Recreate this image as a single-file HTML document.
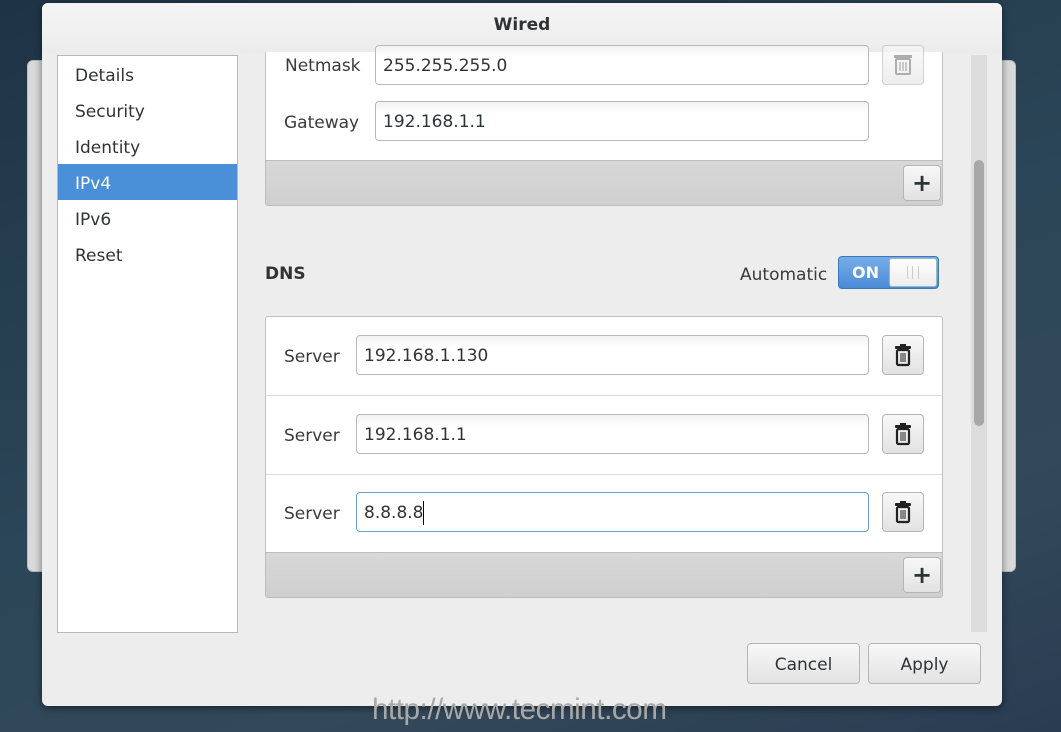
<!DOCTYPE html>
<html><head><meta charset="utf-8"><style>
*{box-sizing:border-box;margin:0;padding:0}
body{width:1061px;height:732px;overflow:hidden;background:linear-gradient(160deg,#1e3446 0%,#2b4658 50%,#33495a 75%,#2a3c52 100%);position:relative;font-family:"DejaVu Sans","Liberation Sans",sans-serif;color:#2e3436;font-size:17px}
.abs{position:absolute}
.behind{left:27px;top:60px;width:989px;height:512px;background:#d9d9d9;border-radius:6px;border:1px solid #bbb}
.dlg{left:42px;top:3px;width:960px;height:703px;background:#ededed;border-radius:6px;box-shadow:0 2px 8px rgba(0,0,0,.5)}
.title{left:0;top:0;width:960px;height:50px;text-align:center;line-height:44px;font-weight:bold;font-size:17px;color:#2e3436;background:linear-gradient(#f4f4f4,#ececec);border-radius:6px 6px 0 0}
.side{left:15px;top:52px;width:181px;height:578px;background:#fff;border:1px solid #b8b8b8}
.side div{height:36px;line-height:36px;padding-left:17px;padding-top:2px}
.side .sel{background:#4a90d9;color:#fff}
.list{background:#fff;border:1px solid #c0c0c0}
.entry{position:absolute;height:40px;border:1px solid #b8b8b8;border-radius:4px;background:linear-gradient(#f2f2f2,#fff 30%);line-height:40px;padding-left:7px;font-size:17px}
.tb{position:absolute;background:linear-gradient(#d8d8d8,#cfcfcf);border:1px solid #bdbdbd}
.btn{position:absolute;border:1px solid #b5b5b5;border-radius:4px;background:linear-gradient(#f8f8f8,#e2e2e2);text-align:center}
.lbl{position:absolute;font-size:17px;color:#3a3a3a}
.sep{position:absolute;left:0;width:676px;height:1px;background:#dadada}
</style></head><body>
<div class="abs behind"></div>
<div class="abs dlg">
 <div class="abs title">Wired</div>
 <div class="abs side"><div>Details</div><div>Security</div><div>Identity</div><div class="sel">IPv4</div><div>IPv6</div><div>Reset</div></div>
</div>
<div class="abs list" style="left:265px;top:52px;width:678px;height:110px;border-top:none"></div>
<div class="lbl" style="left:285px;top:56px">Netmask</div>
<div class="entry" style="left:375px;top:45px;width:494px">255.255.255.0</div>
<div class="btn" style="left:882px;top:45px;width:42px;height:40px;opacity:.6">
<svg width="22" height="24" viewBox="0 0 22 24" style="margin-top:6px"><rect x="4" y="7" width="14" height="15" rx="1" fill="none" stroke="#777" stroke-width="2"/><rect x="2" y="3" width="18" height="3" fill="#777"/><path d="M8 10v9M11 10v9M14 10v9" stroke="#777" stroke-width="1.2"/></svg></div>
<div class="lbl" style="left:284px;top:113px">Gateway</div>
<div class="entry" style="left:375px;top:101px;width:494px">192.168.1.1</div>
<div class="tb" style="left:265px;top:160px;width:678px;height:46px;border-radius:0 0 3px 3px"></div>
<div class="btn" style="left:903px;top:165px;width:38px;height:36px;line-height:34px;font-size:24px;font-weight:bold">+</div>
<div class="lbl" style="left:265px;top:264px;font-weight:bold;color:#2e3436">DNS</div>
<div class="lbl" style="left:740px;top:265px">Automatic</div>
<div class="abs" style="left:838px;top:256px;width:101px;height:33px;border:1px solid #3a78c0;border-radius:4px;background:linear-gradient(#77aee8,#4a8ad6)">
 <span class="abs" style="left:13px;top:6px;color:#fff;font-weight:bold;font-size:16px">ON</span>
 <div class="abs" style="left:50px;top:1px;width:48px;height:29px;background:linear-gradient(#fff,#ececec);border-radius:3px;border:1px solid #9bb"><span class="abs" style="left:17px;top:7px;width:12px;height:13px;border-left:1px solid #ccc;border-right:1px solid #ccc"></span><span class="abs" style="left:22px;top:7px;width:1px;height:13px;background:#ccc"></span></div>
</div>
<div class="abs list" style="left:265px;top:316px;width:678px;height:238px;border-radius:3px 3px 0 0">
 <div class="sep" style="top:78px"></div><div class="sep" style="top:157px"></div>
</div>
<div class="lbl" style="left:284px;top:347px">Server</div>
<div class="entry" style="left:356px;top:335px;width:513px">192.168.1.130</div>
<div class="lbl" style="left:284px;top:426px">Server</div>
<div class="entry" style="left:356px;top:414px;width:513px">192.168.1.1</div>
<div class="lbl" style="left:284px;top:504px">Server</div>
<div class="entry" style="left:356px;top:492px;width:513px;border-color:#6b9fd6;background:#fff">8.8.8.8<span style="display:inline-block;width:1px;height:24px;background:#000;vertical-align:middle"></span></div>
<div class="btn" style="left:882px;top:335px;width:42px;height:40px"><svg width="22" height="24" viewBox="0 0 22 24" style="margin-top:7px"><rect x="5" y="7" width="12" height="15" rx="1.5" fill="none" stroke="#222" stroke-width="2.2"/><rect x="3" y="3" width="16" height="3" rx="1" fill="#222"/><rect x="8" y="1" width="6" height="2" fill="#222"/><path d="M9 10v9M11 10v9M13 10v9" stroke="#222" stroke-width="1"/></svg></div>
<div class="btn" style="left:882px;top:414px;width:42px;height:40px"><svg width="22" height="24" viewBox="0 0 22 24" style="margin-top:7px"><rect x="5" y="7" width="12" height="15" rx="1.5" fill="none" stroke="#222" stroke-width="2.2"/><rect x="3" y="3" width="16" height="3" rx="1" fill="#222"/><rect x="8" y="1" width="6" height="2" fill="#222"/><path d="M9 10v9M11 10v9M13 10v9" stroke="#222" stroke-width="1"/></svg></div>
<div class="btn" style="left:882px;top:492px;width:42px;height:40px"><svg width="22" height="24" viewBox="0 0 22 24" style="margin-top:7px"><rect x="5" y="7" width="12" height="15" rx="1.5" fill="none" stroke="#222" stroke-width="2.2"/><rect x="3" y="3" width="16" height="3" rx="1" fill="#222"/><rect x="8" y="1" width="6" height="2" fill="#222"/><path d="M9 10v9M11 10v9M13 10v9" stroke="#222" stroke-width="1"/></svg></div>
<div class="tb" style="left:265px;top:552px;width:678px;height:46px;border-radius:0 0 3px 3px"></div>
<div class="btn" style="left:903px;top:557px;width:38px;height:36px;line-height:34px;font-size:24px;font-weight:bold">+</div>
<div class="abs" style="left:971px;top:55px;width:16px;height:577px;background:#dcdcdc"></div>
<div class="abs" style="left:974px;top:160px;width:10px;height:266px;background:#a8a8a8;border-radius:5px"></div>
<div class="btn" style="left:747px;top:643px;width:113px;height:41px;line-height:42px">Cancel</div>
<div class="btn" style="left:868px;top:643px;width:113px;height:41px;line-height:42px">Apply</div>
<div class="abs" style="left:372px;top:693px;font-family:'Liberation Sans',sans-serif;font-size:30px;color:#a8a8a8;letter-spacing:-0.5px;transform:scaleX(.99);transform-origin:left">http://www.tecmint.com</div>
</body></html>
